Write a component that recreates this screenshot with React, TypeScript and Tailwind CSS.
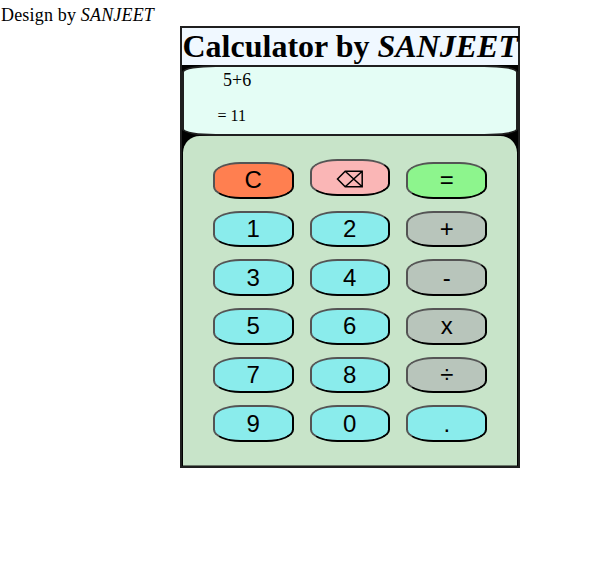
type Key = { label: string; name?: string; tone: string };

const digit = 'bg-[#8aecec]';
const operator = 'bg-[#b8c5bb] pl-[7px]';

const keys: Key[] = [
  { label: 'C', tone: 'bg-[#ff7f50]' },
  { label: '⌫', name: 'Backspace', tone: 'bg-[#fab6b6] -mt-[3px] mb-[3px]' },
  { label: '=', tone: 'bg-[#8df58d] pl-[7px]' },
  { label: '1', tone: digit },
  { label: '2', tone: digit },
  { label: '+', tone: operator },
  { label: '3', tone: digit },
  { label: '4', tone: digit },
  { label: '-', tone: operator },
  { label: '5', tone: digit },
  { label: '6', tone: digit },
  { label: 'x', tone: operator },
  { label: '7', tone: digit },
  { label: '8', tone: digit },
  { label: '÷', tone: operator },
  { label: '9', tone: digit },
  { label: '0', tone: digit },
  { label: '.', tone: 'bg-[#8aecec] pl-[7px]' },
];

function BackspaceIcon() {
  return (
    <svg className="mt-[3px]" width="28" height="18" viewBox="0 0 28 18" fill="none" stroke="black" strokeWidth="1.5">
      <path d="M1.5 9L9.2 1.2H26.2V16.8H9.2ZM9.2 1.2L26.2 16.8M9.2 16.8L26.2 1.2" />
    </svg>
  );
}

function CalcKey({ label, name, tone }: Key) {
  return (
    <button
      aria-label={name}
      className={`flex h-[36.6px] w-[80.5px] items-center justify-center rounded-[34%] border-2 border-black px-[6px] [border-style:outset] font-['Liberation_Sans',Arial,sans-serif] text-[24px] leading-none text-black ${tone}`}
    >
      {name ? <BackspaceIcon /> : label}
    </button>
  );
}

export default function App() {
  return (
    <div className="h-[571px] overflow-hidden bg-white font-['Liberation_Serif','Times_New_Roman',serif] text-black">
      <p className="h-[26px] pt-[5px] pl-px text-[18px] leading-[20px] tracking-[0.18px]">
        Design by <i>SANJEET</i>
      </p>
      <main className="ml-[180px] flex h-[442px] w-[340px] flex-col border-2 border-[#1f1f1f] bg-black">
        <h1 className="h-[37px] bg-[#f0f8ff] pl-[0.5px] text-[32px] leading-[37px] font-bold whitespace-nowrap">
          Calculator by <i>SANJEET</i>
        </h1>
        <section className="h-[71px] rounded-[10%] border-2 border-[#1f1f1f] bg-[#e4fdf5] leading-[18px]">
          <p className="pt-[4px] pl-[39px] text-[18px]">5+6</p>
          <p className="pt-[18px] pl-[33.5px] text-[16px]">= 11</p>
        </section>
        <section className="mx-px grid h-[330px] grid-cols-[repeat(3,80.5px)] content-start gap-x-4 gap-y-[12.1px] rounded-t-[5%] border-b border-[#6b7a6b] bg-[#c8e4c9] pt-[26px] pl-[30px]">
          {keys.map((key) => (
            <CalcKey key={key.label} {...key} />
          ))}
        </section>
      </main>
    </div>
  );
}
